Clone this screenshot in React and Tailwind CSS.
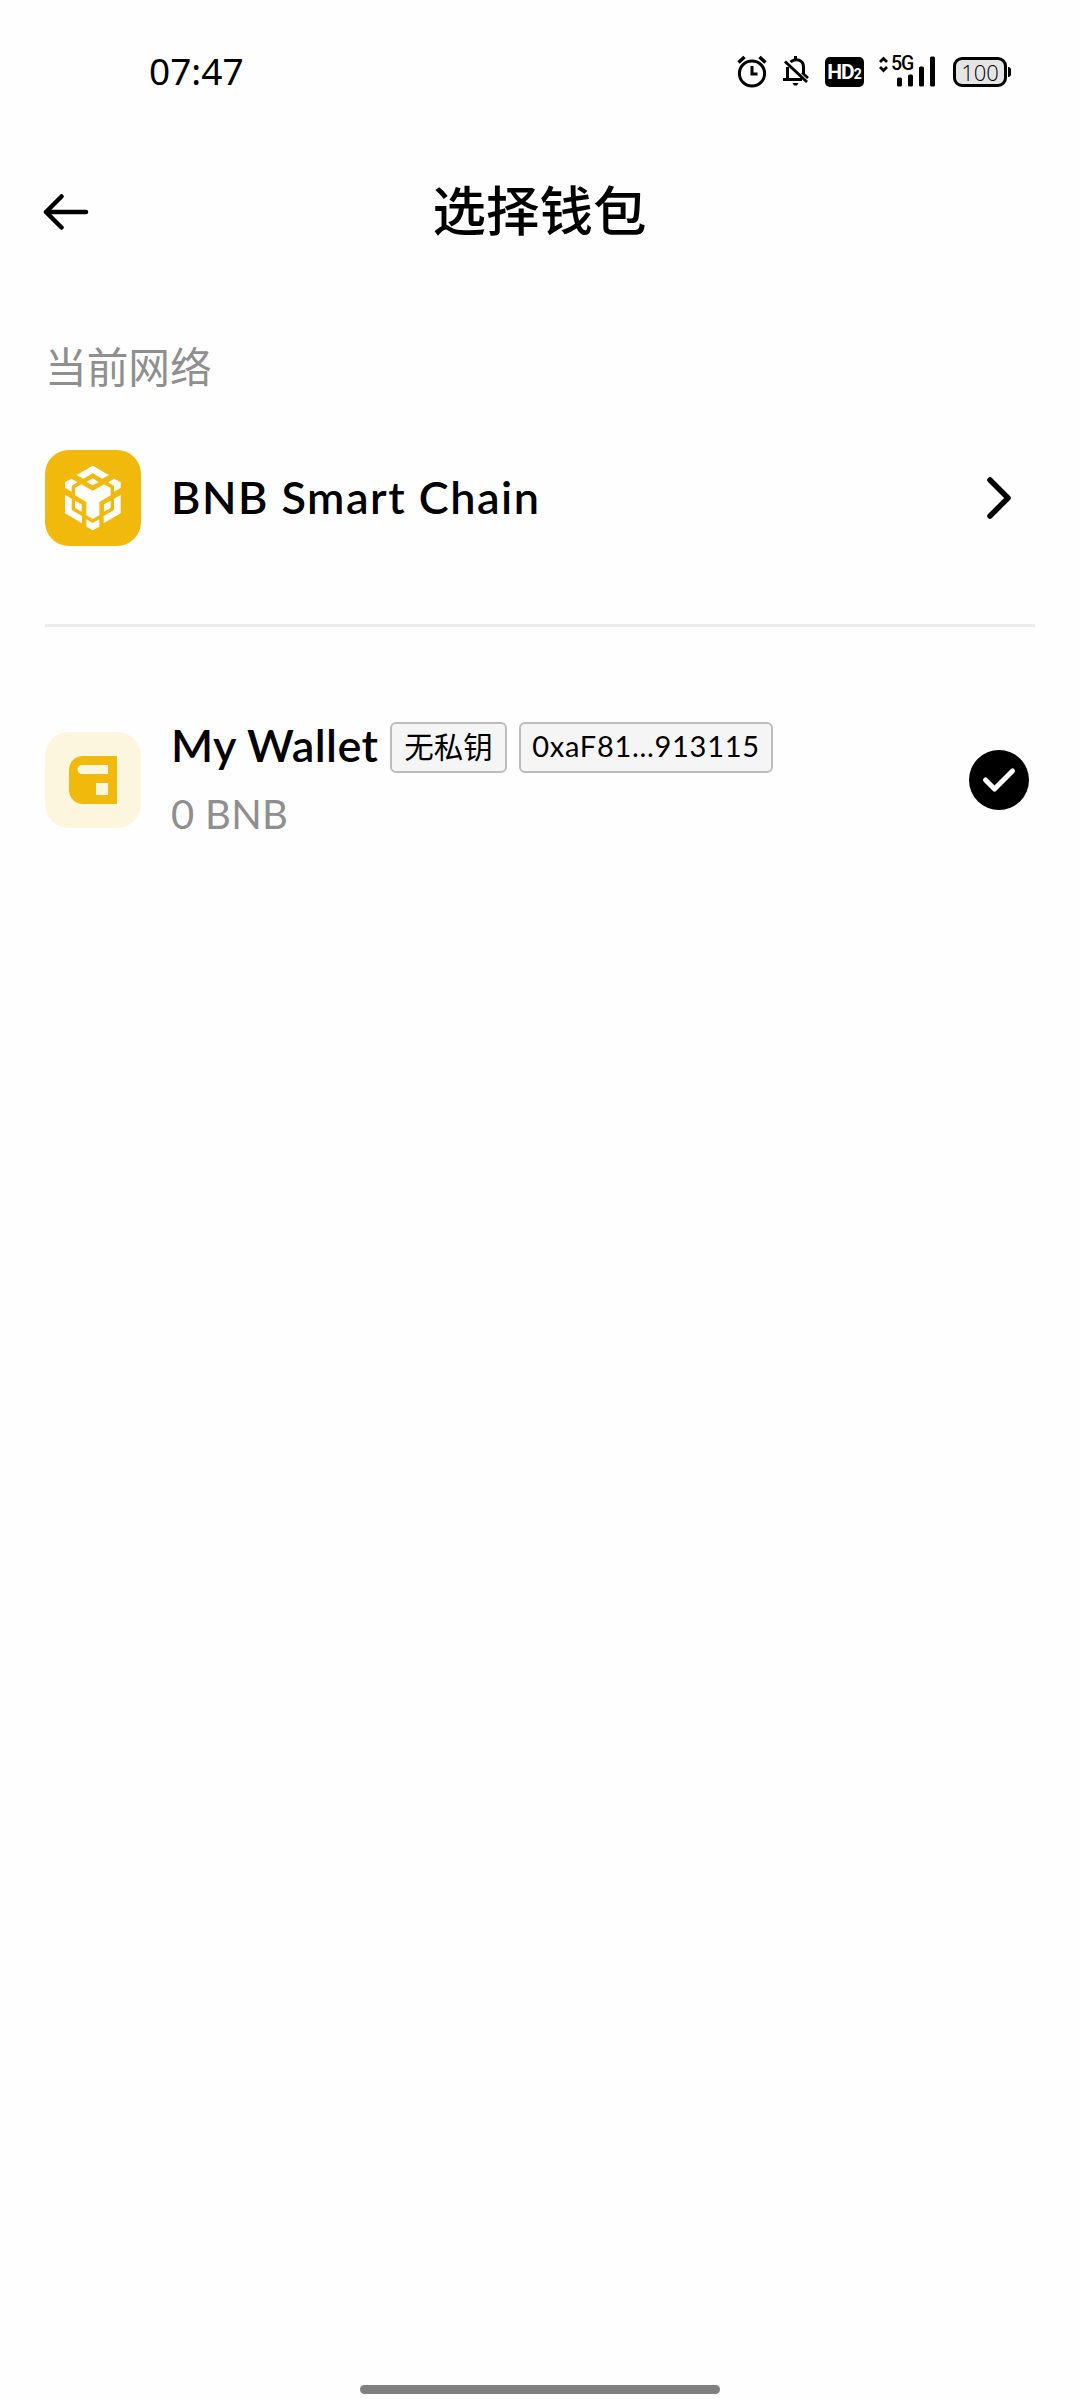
import React from "react";

function AlarmIcon() {
  return (
    <svg width="32" height="34" viewBox="0 0 32 34" fill="none" stroke="#000" strokeWidth="3">
      <circle cx="15" cy="18.5" r="12.6" />
      <path d="M15 11v8h5.500" />
      <path d="M1.500 7.500l6-5.500M28.500 7.500l-6-5.500" strokeWidth="3.500" />
    </svg>
  );
}

function MutedBellIcon() {
  return (
    <svg width="28" height="34" viewBox="0 0 28 34" fill="none" stroke="#000" strokeWidth="3">
      <path d="M8.500 7c5-4.500 13-2 13 5v7M5.500 12v12.500M1 24.500h19" />
      <path d="M3 6.500l22 20.500" />
      <path d="M20 17.500l6 5.500" strokeWidth="2.500" />
      <path d="M13.500 1v4" />
      <path d="M10.500 28h6l-1.500 2.500h-3z" fill="#000" stroke="none" />
    </svg>
  );
}

function SignalIcon() {
  return (
    <svg width="58" height="34" viewBox="0 0 58 34" fill="none">
      <path d="M1 7l3.500-3.500 3.500 3.500M1 12l3.500 3.500 3.500-3.500" stroke="#000" strokeWidth="2.800" />
      <rect x="18" y="22.500" width="5" height="9" rx="1.500" fill="#000" />
      <rect x="29" y="19.500" width="5" height="12" rx="1.500" fill="#000" />
      <rect x="40" y="11.500" width="5" height="20" rx="1.500" fill="#000" />
      <rect x="51" y="1.500" width="5" height="30" rx="1.500" fill="#000" />
    </svg>
  );
}

function BnbLogo() {
  return (
    <svg width="96" height="96" viewBox="0 0 288 288" fill="#fff">
      <path d="M95 75l48-28 49 28-20 11-29-16-28 16z" />
      <path d="M143 85l18 11-18 10-18-10z" />
      <path d="M60 97l19-11 19 11-18 11v17l-20-12z" />
      <path d="M227 97l-19-11-19 11 18 11v17l20-12z" />
      <path d="M90 114l19-11 34 19 35-19 19 11v22l-34 20v40l-20 11-19-11v-40l-34-20z" />
      <path d="M60 135l20 11v34l31 18v22l-51-30z" />
      <path d="M227 135l-20 11v34l-31 18v22l51-30z" />
      <path d="M90 152l20 11v22l-20-11z" />
      <path d="M197 152l-20 11v22l20-11z" />
      <path d="M124 208l19 11 20-11v22l-20 11-19-11z" />
    </svg>
  );
}

function App() {
  return (
    <div className="flex h-[2400px] w-[1080px] flex-col bg-[#fefefe] font-['Lato','Noto_Sans_CJK_SC',sans-serif] text-black">
      {/* Status bar */}
      <div className="flex h-36 items-center pl-[149px] pr-[69px]">
        <span className="pb-[3px] font-['Noto_Sans'] text-[37px] leading-none">07:47</span>
        <div className="ml-auto flex h-[34px] items-center">
          <AlarmIcon />
          <div className="ml-[13px]">
            <MutedBellIcon />
          </div>
          <div className="ml-[15px] flex h-[30px] w-[39px] items-baseline justify-center rounded-[5px] bg-black font-['Roboto'] font-bold text-white">
            <span className="text-[21px] leading-[31px] tracking-[-1px]">HD</span>
            <span className="text-[14px]">2</span>
          </div>
          <div className="relative ml-[15px]">
            <SignalIcon />
            <span className="absolute left-[12px] top-0 font-['Roboto'] text-[19.500px] font-medium leading-[18px] tracking-[-1px]">
              5G
            </span>
          </div>
          <div className="ml-[16px] flex h-[30px] w-[54px] items-center justify-center rounded-[9px] border-[3px] border-black bg-[#e5e5e5] font-['Open_Sans'] text-[22px] font-light leading-none">
            100
          </div>
          <div className="ml-px h-[10px] w-[3px] rounded-r-sm bg-black"></div>
        </div>
      </div>

      {/* Header */}
      <div className="flex h-[136px] items-center px-[43px]">
        <svg width="46" height="36" viewBox="0 0 46 36" fill="none" stroke="#000" strokeWidth="4.500" strokeLinecap="round" strokeLinejoin="round">
          <path d="M18.500 2.500L3 18l15.500 15.500M3 18h40" />
        </svg>
        <h1 className="flex-1 pb-[9px] pr-[47px] text-center font-['Noto_Sans_CJK_SC'] text-[53.500px] font-medium leading-none">
          选择钱包
        </h1>
      </div>

      {/* Network */}
      <div className="px-[45px]">
        <p className="pt-[64px] font-['Noto_Sans_CJK_SC'] text-[41.700px] font-normal leading-[42px] text-[#8f8f8f]">
          当前网络
        </p>
        <div className="mt-[64px] flex h-24 items-center">
          <div className="size-24 rounded-3xl bg-[#f0b90b]">
            <BnbLogo />
          </div>
          <span className="ml-[30px] text-[45px] font-semibold tracking-[1.500px]">BNB Smart Chain</span>
          <svg className="ml-auto mr-[23px]" width="26" height="44" viewBox="0 0 26 44" fill="none" stroke="#000" strokeWidth="5.500" strokeLinecap="round" strokeLinejoin="round">
            <path d="M4 4l18 18L4 40" />
          </svg>
        </div>
        <div className="mt-[78px] h-[3px] bg-[#ebebeb]"></div>
      </div>

      {/* Wallet */}
      <div className="mt-[105px] flex h-24 items-center px-[45px]">
        <div className="flex size-24 items-center justify-center rounded-3xl bg-[#fdf6df]">
          <svg width="48" height="48" viewBox="0 0 48 48">
            <path d="M14 0h34v48H14A14 14 0 0 1 0 34V14A14 14 0 0 1 14 0z" fill="#f0b90b" />
            <path d="M13 9h26v9H13a4.500 4.500 0 0 1 0-9zM27 27h12v12H27z" fill="#fdf6df" />
          </svg>
        </div>
        <div className="ml-[30px]">
          <div className="flex h-[68px] items-center pt-[2px]">
            <span className="w-[207px] whitespace-nowrap pb-[2px] text-[45px] font-semibold tracking-[0.400px]">My Wallet</span>
            <span className="ml-[12px] flex h-[51px] w-[117px] items-center justify-center rounded-md border-2 border-[#bcbcbc] bg-[#f5f5f5] pb-[4px] font-['Noto_Sans_CJK_SC'] text-[29.500px] font-normal">
              无私钥
            </span>
            <span className="ml-[12px] flex h-[51px] w-[254px] items-center justify-center rounded-md border-2 border-[#bcbcbc] bg-[#f5f5f5] pb-[2px] text-[29px] tracking-[0.700px]">
              0xaF81...913115
            </span>
          </div>
          <p className="pt-px text-[40px] leading-[67px] tracking-[0.300px] text-[#8f8f8f]">0 BNB</p>
        </div>
        <svg className="ml-auto mr-[6px]" width="60" height="60" viewBox="0 0 60 60" fill="none">
          <circle cx="30" cy="30" r="30" fill="#000" />
          <path d="M16.500 30l9 9L43.500 21" stroke="#fff" strokeWidth="5" strokeLinecap="round" strokeLinejoin="round" />
        </svg>
      </div>

      {/* Home indicator */}
      <div className="mx-auto mb-[6px] mt-auto h-[9px] w-[360px] rounded-full bg-[#808080]"></div>
    </div>
  );
}

export default App;
